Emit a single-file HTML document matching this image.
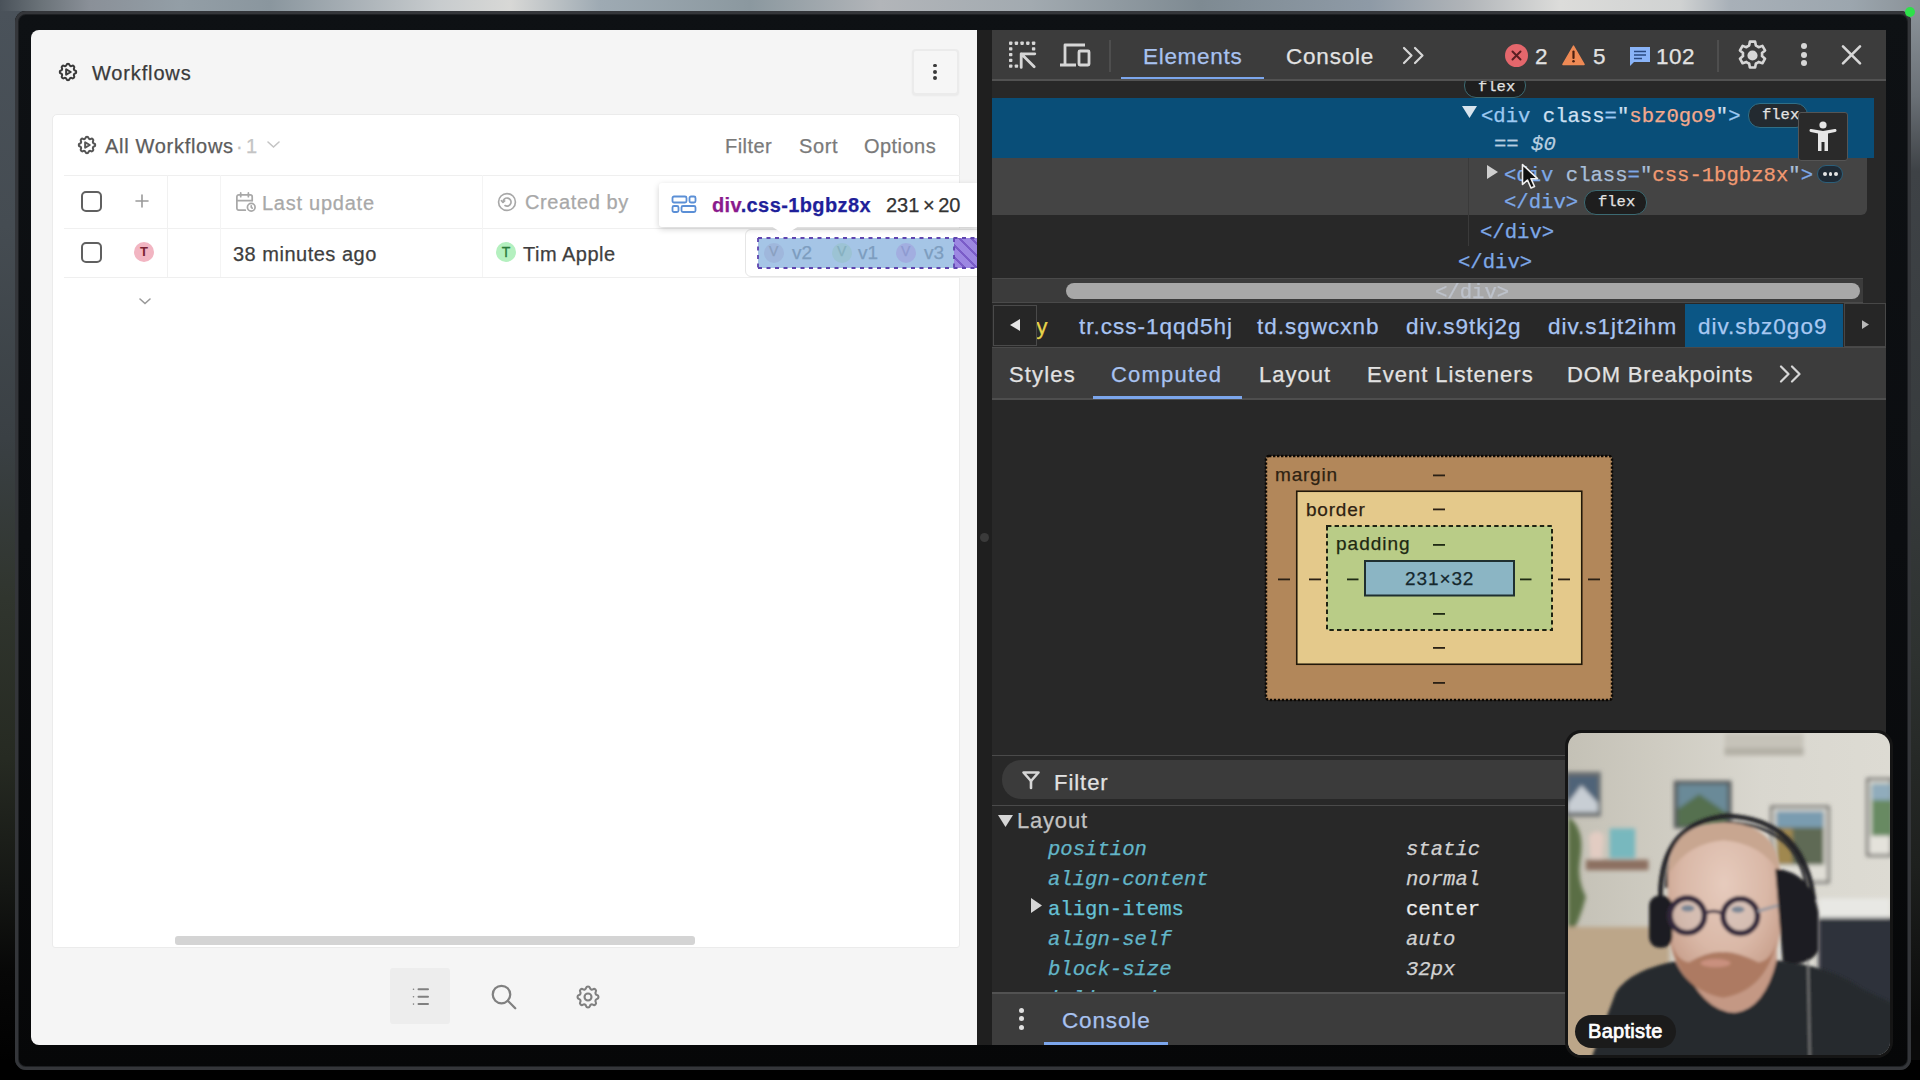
<!DOCTYPE html>
<html><head><meta charset="utf-8">
<style>
*{box-sizing:border-box;margin:0;padding:0}
html,body{width:1920px;height:1080px;overflow:hidden}
body{position:relative;background:#000;font-family:"Liberation Sans",sans-serif}
.a{position:absolute}
.sans{font-family:"Liberation Sans",sans-serif}
.t{line-height:1;white-space:nowrap;-webkit-text-stroke:0.25px currentColor}
.mono{font-family:"Liberation Mono",monospace}
#bgtop{left:0;top:0;width:1920px;height:40px;background:linear-gradient(90deg,#4a525a 0px,#6a7278 40px,#8a9098 90px,#939ea6 180px,#8a969e 270px,#a7afb5 350px,#c8ccce 440px,#d8d8d6 510px,#9eaab3 600px,#8b989f 750px,#b2b5b9 880px,#a2aab0 1030px,#7e8a92 1200px,#8e9aa6 1370px,#b0b4b8 1465px,#dcdcda 1560px,#d0d2d2 1680px,#a8b0b8 1730px,#9ca6ae 1850px,#8a9298 1920px)}
#bgleft{left:0;top:11px;width:40px;height:1069px;background:linear-gradient(180deg,#4a525a 0%,#454c52 20%,#3a4044 40%,#30352e 55%,#262a22 70%,#151714 82%,#070707 90%,#000 100%)}
#bgright{left:1880px;top:11px;width:40px;height:1069px;background:linear-gradient(180deg,#8a9298 0%,#6a7076 8%,#3e4246 15%,#383c3e 40%,#2e3230 60%,#1e201e 80%,#0a0a0a 95%)}
#bgbot{left:0;top:1060px;width:1920px;height:20px;background:#000}
#frame{left:15px;top:11px;width:1896px;height:1059px;border-radius:11px;background:linear-gradient(180deg,#0e1114 0%,#0b0d10 50%,#060708 100%);box-shadow:inset 0 0 0 3px #34363a, inset 0 0 0 4px #1e2023}
#left{left:31px;top:30px;width:946px;height:1015px;background:#f5f5f5;border-radius:8px 0 0 8px;overflow:hidden}
#sep{left:977px;top:30px;width:15px;height:1015px;background:#1f1f1f}
#dt{left:992px;top:30px;width:894px;height:1015px;background:#282828;overflow:hidden}
</style></head><body>
<div id="bgtop" class="a"></div>
<div id="bgleft" class="a"></div>
<div id="bgright" class="a"></div>
<div id="bgbot" class="a"></div>
<div id="frame" class="a"></div>
<div id="left" class="a"></div>

<!-- LEFT PANEL CONTENT -->
<svg class="a" style="left:56.5px;top:61px" width="22" height="22" viewBox="0 0 24 24" fill="none" stroke="#3a3a3a" stroke-width="2.2" stroke-linecap="round" stroke-linejoin="round"><path d="M10.325 4.317c.426 -1.756 2.924 -1.756 3.35 0a1.724 1.724 0 0 0 2.573 1.066c1.543 -.94 3.31 .826 2.37 2.37a1.724 1.724 0 0 0 1.065 2.572c1.756 .426 1.756 2.924 0 3.35a1.724 1.724 0 0 0 -1.066 2.573c.94 1.543 -.826 3.31 -2.37 2.37a1.724 1.724 0 0 0 -2.572 1.065c-.426 1.756 -2.924 1.756 -3.35 0a1.724 1.724 0 0 0 -2.573 -1.066c-1.543 .94 -3.31 -.826 -2.37 -2.37a1.724 1.724 0 0 0 -1.065 -2.572c-1.756 -.426 -1.756 -2.924 0 -3.35a1.724 1.724 0 0 0 1.066 -2.573c-.94 -1.543 .826 -3.31 2.37 -2.37c1 .608 2.296 .07 2.572 -1.065z"/><path d="M10 9v6l5 -3z"/></svg>
<div class="a t" style="left:92px;top:63px;font-size:20px;letter-spacing:0.85px;color:#3a3a3a">Workflows</div>
<div class="a" style="left:912px;top:48.5px;width:47px;height:46.5px;border:2px solid #ebebeb;border-radius:4px;background:#f6f6f6;box-shadow:0 1px 2px rgba(0,0,0,0.05)"></div>
<div class="a" style="left:933.2px;top:63.7px;width:3.6px;height:3.6px;border-radius:2px;background:#3a3a3a"></div>
<div class="a" style="left:933.2px;top:70px;width:3.6px;height:3.6px;border-radius:2px;background:#3a3a3a"></div>
<div class="a" style="left:933.2px;top:76.3px;width:3.6px;height:3.6px;border-radius:2px;background:#3a3a3a"></div>

<div class="a" style="left:52px;top:114px;width:908px;height:834px;background:#fff;border:1px solid #ebebeb;border-radius:5px 5px 3px 3px"></div>
<svg class="a" style="left:76px;top:134px" width="22" height="22" viewBox="0 0 24 24" fill="none" stroke="#555" stroke-width="2.2" stroke-linecap="round" stroke-linejoin="round"><path d="M10.325 4.317c.426 -1.756 2.924 -1.756 3.35 0a1.724 1.724 0 0 0 2.573 1.066c1.543 -.94 3.31 .826 2.37 2.37a1.724 1.724 0 0 0 1.065 2.572c1.756 .426 1.756 2.924 0 3.35a1.724 1.724 0 0 0 -1.066 2.573c.94 1.543 -.826 3.31 -2.37 2.37a1.724 1.724 0 0 0 -2.572 1.065c-.426 1.756 -2.924 1.756 -3.35 0a1.724 1.724 0 0 0 -2.573 -1.066c-1.543 .94 -3.31 -.826 -2.37 -2.37a1.724 1.724 0 0 0 -1.065 -2.572c-1.756 -.426 -1.756 -2.924 0 -3.35a1.724 1.724 0 0 0 1.066 -2.573c-.94 -1.543 .826 -3.31 2.37 -2.37c1 .608 2.296 .07 2.572 -1.065z"/><path d="M10 9v6l5 -3z"/></svg>
<div class="a t" style="left:105px;top:135.5px;font-size:20px;letter-spacing:0.7px;color:#5c5c5c">All Workflows</div>
<div class="a t" style="left:236px;top:135.5px;font-size:20px;color:#c4c4c4">·</div>
<div class="a t" style="left:246px;top:135.5px;font-size:20px;color:#c4c4c4">1</div>
<svg class="a" style="left:266px;top:139px" width="15" height="11" viewBox="0 0 15 11" fill="none" stroke="#c4c4c4" stroke-width="1.6" stroke-linecap="round"><path d="M2 3l5.5 5 5.5-5"/></svg>
<div class="a t" style="left:725px;top:136px;font-size:20px;letter-spacing:0.45px;color:#7a7a7a">Filter</div>
<div class="a t" style="left:799px;top:136px;font-size:20px;letter-spacing:0.6px;color:#7a7a7a">Sort</div>
<div class="a t" style="left:864px;top:136px;font-size:20px;letter-spacing:0.45px;color:#7a7a7a">Options</div>

<div class="a" style="left:64px;top:175px;width:896px;height:1px;background:#efefef"></div>
<div class="a" style="left:64px;top:228px;width:896px;height:1px;background:#f0f0f0"></div>
<div class="a" style="left:64px;top:277px;width:896px;height:1px;background:#efefef"></div>
<div class="a" style="left:167px;top:175px;width:1px;height:102px;background:#f1f1f1"></div>
<div class="a" style="left:220px;top:175px;width:1px;height:102px;background:#f4f4f4"></div>
<div class="a" style="left:482px;top:175px;width:1px;height:102px;background:#f4f4f4"></div>

<div class="a" style="left:80.5px;top:190.5px;width:21.5px;height:21.5px;border:2px solid #606060;border-radius:5px"></div>
<div class="a" style="left:80.5px;top:241.5px;width:21.5px;height:21.5px;border:2px solid #606060;border-radius:5px"></div>
<svg class="a" style="left:134px;top:193px" width="16" height="16" viewBox="0 0 16 16" stroke="#9a9a9a" stroke-width="1.6" stroke-linecap="round"><path d="M8 2v12M2 8h12"/></svg>
<div class="a" style="left:134px;top:242px;width:20px;height:20px;border-radius:10px;background:#f2b5c2;color:#7a2232;font-size:13px;font-weight:700;line-height:20px;text-align:center">T</div>

<svg class="a" style="left:234px;top:190px" width="23" height="23" viewBox="0 0 24 24" fill="none" stroke="#a8a8a8" stroke-width="1.8" stroke-linecap="round" stroke-linejoin="round"><path d="M11.795 21h-6.795a2 2 0 0 1 -2 -2v-12a2 2 0 0 1 2 -2h12a2 2 0 0 1 2 2v4"/><path d="M18 18m-4 0a4 4 0 1 0 8 0a4 4 0 1 0 -8 0"/><path d="M15 3v4"/><path d="M7 3v4"/><path d="M3 11h16"/><path d="M18 16.496v1.504l1 1"/></svg>
<div class="a t" style="left:262px;top:192.5px;font-size:20px;letter-spacing:0.75px;color:#a8a8a8">Last update</div>
<svg class="a" style="left:496px;top:191px" width="22" height="22" viewBox="0 0 24 24" fill="none" stroke="#a8a8a8" stroke-width="1.8" stroke-linecap="round" stroke-linejoin="round"><circle cx="12" cy="12" r="9.2"/><path d="M7.6 12.3a4.4 4.4 0 1 1 2.2 3.6"/><path d="M5.9 10.6l1.7 1.9 1.9-1.6"/></svg>
<div class="a t" style="left:525px;top:192px;font-size:20px;letter-spacing:0.6px;color:#a8a8a8">Created by</div>

<div class="a t" style="left:233px;top:243.5px;font-size:20px;letter-spacing:0.5px;color:#3e3e3e">38 minutes ago</div>
<div class="a" style="left:496px;top:242px;width:20px;height:20px;border-radius:10px;background:#b4f0bf;color:#2a7a3a;font-size:14px;font-weight:400;-webkit-text-stroke:0.3px #2a7a3a;line-height:20px;text-align:center">T</div>
<div class="a t" style="left:523px;top:243.5px;font-size:20px;letter-spacing:0.5px;color:#3e3e3e">Tim Apple</div>

<!-- hovered cell + highlight -->
<div class="a" style="left:745px;top:229px;width:240px;height:48px;border:1px solid #e6e6e6;border-radius:6px;background:#fff"></div>
<div class="a" style="left:758px;top:238px;width:196px;height:30px;background:#a5c5e6"></div>
<div class="a" style="left:954px;top:238px;width:23px;height:30px;background:repeating-linear-gradient(45deg,#9c87e2 0 7px,#7a5cc8 7px 8.5px)"></div>
<svg class="a" style="left:757px;top:237px" width="220" height="32" viewBox="0 0 220 32" fill="none" stroke="#5f45b0" stroke-width="1.8" stroke-dasharray="4 4.5"><path d="M1 1H220M1 31H220M1 1V31M197 1V31"/></svg>
<div class="a" style="left:764px;top:243px;width:20px;height:20px;border-radius:10px;background:#9fb7dc"></div>
<div class="a t" style="left:769px;top:244px;font-size:14px;color:#8aa0c0">V</div>
<div class="a t" style="left:792px;top:243px;font-size:19px;color:#7d9dbf">v2</div>
<div class="a" style="left:832px;top:243px;width:20px;height:20px;border-radius:10px;background:#9cc3d4"></div>
<div class="a t" style="left:837px;top:244px;font-size:14px;color:#86b0c0">V</div>
<div class="a t" style="left:858px;top:243px;font-size:19px;color:#7d9dbf">v1</div>
<div class="a" style="left:896px;top:243px;width:20px;height:20px;border-radius:10px;background:#a2aee0"></div>
<div class="a t" style="left:901px;top:244px;font-size:14px;color:#8e9ad0">V</div>
<div class="a t" style="left:924px;top:243px;font-size:19px;color:#7d9dbf">v3</div>

<!-- tooltip -->
<div class="a" style="left:659px;top:182.5px;width:318px;height:44px;background:#fff;border-radius:3px 0 0 3px;box-shadow:0 2px 6px rgba(0,0,0,0.18)"></div>
<div class="a" style="left:771px;top:226px;width:0;height:0;border-left:14px solid transparent;border-right:14px solid transparent;border-top:9px solid #fff"></div>
<svg class="a" style="left:671px;top:195px" width="26" height="19" viewBox="0 0 26 19" fill="none" stroke="#5b8fd6" stroke-width="1.8"><rect x="1.5" y="1.5" width="14" height="6" rx="1.5"/><rect x="18.5" y="1.5" width="6" height="6" rx="1.5"/><rect x="1.5" y="11" width="6" height="6" rx="1.5"/><rect x="10.5" y="11" width="14" height="6" rx="1.5"/></svg>
<div class="a t" style="left:712px;top:195px;font-size:20px;font-weight:700;letter-spacing:0.4px;color:#1f1f9a"><span style="color:#8a1a8c">div</span>.css-1bgbz8x</div>
<div class="a t" style="left:886px;top:195px;font-size:20px;color:#333">231<span style="letter-spacing:-2px"> </span>×<span style="letter-spacing:-2px"> </span>20</div>

<svg class="a" style="left:137px;top:295px" width="16" height="12" viewBox="0 0 16 12" fill="none" stroke="#999" stroke-width="1.6" stroke-linecap="round"><path d="M3 4l5 4.5 5-4.5"/></svg>

<div class="a" style="left:175px;top:935.5px;width:520px;height:9px;border-radius:3px;background:#d4d4d4"></div>

<!-- bottom nav -->
<div class="a" style="left:390px;top:968px;width:60px;height:56px;background:#ededed;border-radius:3px"></div>
<svg class="a" style="left:408px;top:984px" width="26" height="26" viewBox="0 0 26 26" fill="none" stroke="#808080" stroke-width="2" stroke-linecap="round"><path d="M10.5 5.3h9.5M10.5 12.7h9.5M10.5 20.1h9.5"/><path d="M5.5 5.3v.01M5.5 12.7v.01M5.5 20.1v.01" stroke-width="1.6"/></svg>
<svg class="a" style="left:489px;top:982px" width="30" height="30" viewBox="0 0 24 24" fill="none" stroke="#808080" stroke-width="1.8" stroke-linecap="round"><path d="M10 10m-7 0a7 7 0 1 0 14 0a7 7 0 1 0 -14 0"/><path d="M21 21l-6 -6"/></svg>
<svg class="a" style="left:574px;top:983px" width="28" height="28" viewBox="0 0 24 24" fill="none" stroke="#808080" stroke-width="1.8" stroke-linecap="round" stroke-linejoin="round"><path d="M10.325 4.317c.426 -1.756 2.924 -1.756 3.35 0a1.724 1.724 0 0 0 2.573 1.066c1.543 -.94 3.31 .826 2.37 2.37a1.724 1.724 0 0 0 1.065 2.572c1.756 .426 1.756 2.924 0 3.35a1.724 1.724 0 0 0 -1.066 2.573c.94 1.543 -.826 3.31 -2.37 2.37a1.724 1.724 0 0 0 -2.572 1.065c-.426 1.756 -2.924 1.756 -3.35 0a1.724 1.724 0 0 0 -2.573 -1.066c-1.543 .94 -3.31 -.826 -2.37 -2.37a1.724 1.724 0 0 0 -1.065 -2.572c-1.756 -.426 -1.756 -2.924 0 -3.35a1.724 1.724 0 0 0 1.066 -2.573c-.94 -1.543 .826 -3.31 2.37 -2.37c1 .608 2.296 .07 2.572 -1.065z"/><circle cx="12" cy="12" r="3"/></svg>

<div id="sep" class="a"></div>
<div class="a" style="left:980px;top:533px;width:9px;height:9px;border-radius:5px;background:#3a3a3a"></div>
<div class="a" style="left:1905px;top:7px;width:10px;height:10px;border-radius:5px;background:#2ee04a"></div>
<div id="dt" class="a"></div>

<!-- DEVTOOLS -->
<div class="a" style="left:1464px;top:73px;width:62px;height:25px;border-radius:12px;background:#1e1e1e;border:1.5px solid #3c6a72"></div>
<div class="a t mono" style="left:1478px;top:80px;font-size:15.5px;color:#e3e3e3">flex</div>
<div class="a" style="left:992px;top:30px;width:894px;height:49px;background:#3c3c3c"></div>
<div class="a" style="left:992px;top:79px;width:894px;height:2px;background:#525252"></div>
<!-- inspect icon -->
<svg class="a" style="left:1007px;top:41px" width="32" height="30" viewBox="0 0 32 30" fill="#d6d6d6"><g><rect x="2" y="0.5" width="3.4" height="3.4" rx="0.8"/><rect x="7.7" y="0.5" width="3.4" height="3.4" rx="0.8"/><rect x="13.4" y="0.5" width="3.4" height="3.4" rx="0.8"/><rect x="19.1" y="0.5" width="3.4" height="3.4" rx="0.8"/><rect x="24.9" y="0.5" width="3.4" height="3.4" rx="0.8"/><rect x="24.9" y="6.2" width="3.4" height="3.4" rx="0.8"/><rect x="2" y="6.2" width="3.4" height="3.4" rx="0.8"/><rect x="2" y="11.9" width="3.4" height="3.4" rx="0.8"/><rect x="2" y="17.7" width="3.4" height="3.4" rx="0.8"/><rect x="2" y="23.4" width="3.4" height="3.4" rx="0.8"/><rect x="7.7" y="23.4" width="3.4" height="3.4" rx="0.8"/></g><path d="M14.2 12.8L27.2 25.8M14.2 12.8h13.6M14.2 12.8v13.6" fill="none" stroke="#d6d6d6" stroke-width="2.8" stroke-linecap="round"/></svg>
<!-- device icon -->
<svg class="a" style="left:1058px;top:42px" width="34" height="26" viewBox="0 0 34 26" fill="none" stroke="#d6d6d6" stroke-width="2.8" stroke-linejoin="round"><path d="M27 3H7v20H2M7 23h11"/><rect x="21" y="9" width="10" height="14" rx="1"/></svg>
<div class="a" style="left:1108.5px;top:40px;width:2px;height:32px;background:#4e4e4e"></div>
<div class="a t" style="left:1143px;top:46px;font-size:22.5px;letter-spacing:0.7px;color:#a8c2f0">Elements</div>
<div class="a" style="left:1121px;top:77px;width:143px;height:3px;background:#7ca6ec"></div>
<div class="a t" style="left:1286px;top:46px;font-size:22.5px;letter-spacing:0.8px;color:#e2e2e2">Console</div>
<svg class="a" style="left:1402px;top:46px" width="25" height="19" viewBox="0 0 25 19" fill="none" stroke="#d6d6d6" stroke-width="2.2" stroke-linecap="round" stroke-linejoin="round"><path d="M2 2l7.5 7.5L2 17M13 2l7.5 7.5L13 17"/></svg>
<!-- error/warn/info -->
<div class="a" style="left:1505px;top:44px;width:23px;height:23px;border-radius:12px;background:#e4676c"></div>
<svg class="a" style="left:1505px;top:44px" width="23" height="23" viewBox="0 0 23 23" stroke="#5a1f22" stroke-width="2" stroke-linecap="round"><path d="M7.5 7.5l8 8M15.5 7.5l-8 8"/></svg>
<div class="a t" style="left:1535px;top:46px;font-size:22.5px;color:#e2e2e2">2</div>
<svg class="a" style="left:1562px;top:45px" width="23" height="20.5" viewBox="0 0 25 22"><path d="M12.5 1L24 21H1z" fill="#ef8a55" stroke="#ef8a55" stroke-width="1.5" stroke-linejoin="round"/><path d="M12.5 7v7" stroke="#4a2010" stroke-width="2.4" stroke-linecap="round"/><circle cx="12.5" cy="17.5" r="1.4" fill="#4a2010"/></svg>
<div class="a t" style="left:1593px;top:46px;font-size:22.5px;color:#e2e2e2">5</div>
<svg class="a" style="left:1629px;top:46px" width="22" height="20" viewBox="0 0 22 20"><path d="M1 1h20v15H5l-4 4z" fill="#8ab4f8"/><path d="M5 5.5h12M5 9h12M5 12.5h8" stroke="#2a4a80" stroke-width="1.6"/></svg>
<div class="a t" style="left:1656px;top:46px;font-size:22.5px;letter-spacing:0.5px;color:#e2e2e2">102</div>
<div class="a" style="left:1716.5px;top:40px;width:2px;height:32px;background:#4e4e4e"></div>
<svg class="a" style="left:1734.5px;top:37.5px" width="35" height="35" viewBox="0 0 24 24" fill="none" stroke="#d6d6d6" stroke-width="1.8" stroke-linejoin="round"><path d="M10.2 2.5h3.6l.5 2.7c.7.3 1.3.6 1.9 1.1l2.6-.9 1.8 3.1-2.1 1.8c.1.7.1 1.4 0 2.1l2.1 1.8-1.8 3.1-2.6-.9c-.6.5-1.2.8-1.9 1.1l-.5 2.7h-3.6l-.5-2.7c-.7-.3-1.3-.6-1.9-1.1l-2.6.9-1.8-3.1 2.1-1.8c-.1-.7-.1-1.4 0-2.1L3.4 8.5l1.8-3.1 2.6.9c.6-.5 1.2-.8 1.9-1.1z"/><circle cx="12" cy="12" r="2.6" fill="#d6d6d6"/></svg>
<div class="a" style="left:1801px;top:43px;width:6px;height:6px;border-radius:3px;background:#d6d6d6"></div>
<div class="a" style="left:1801px;top:52px;width:6px;height:6px;border-radius:3px;background:#d6d6d6"></div>
<div class="a" style="left:1801px;top:60px;width:6px;height:6px;border-radius:3px;background:#d6d6d6"></div>
<svg class="a" style="left:1840px;top:44px" width="23" height="22" viewBox="0 0 23 22" stroke="#d6d6d6" stroke-width="2.6" stroke-linecap="round"><path d="M3 2.3l17 17M20 2.3l-17 17"/></svg>

<!-- elements tree -->
<div class="a" style="left:992px;top:98px;width:882px;height:60px;background:#094e78"></div>
<div class="a" style="left:992px;top:158px;width:875px;height:57px;background:#444;border-radius:0 0 6px 0"></div>
<div class="a" style="left:992px;top:79px;width:894px;height:2px;background:#525252"></div>

<svg class="a" style="left:1462px;top:106px" width="15" height="12" viewBox="0 0 15 12"><path d="M0 0h15L7.5 12z" fill="#d8e4ee"/></svg>
<div class="a t mono" style="left:1481px;top:107px;font-size:20.6px;color:#9dc9f2">&lt;div <span style="color:#cfe0f2">class</span>=<span style="color:#cfe0f2">"</span><span style="color:#f4a98c">sbz0go9</span><span style="color:#cfe0f2">"</span>&gt;</div>
<div class="a" style="left:1748px;top:103px;width:60px;height:25px;border-radius:12px;background:#232a30;border:1.5px solid #2f6f88"></div>
<div class="a t mono" style="left:1762px;top:108px;font-size:15.5px;color:#e3e3e3">flex</div>
<div class="a t mono" style="left:1494px;top:134.5px;font-size:20.6px;color:#b9cfe0">== <i>$0</i></div>
<div class="a" style="left:1798px;top:112px;width:50px;height:49px;background:#2a2a2a;border:1.5px solid #555;border-radius:3px"></div>
<svg class="a" style="left:1808px;top:120px" width="30" height="32" viewBox="0 0 30 32" fill="#e6e6e6"><circle cx="15" cy="5" r="3.6"/><path d="M1.5 10.5c0-1 .8-1.6 1.7-1.4L15 11l11.8-1.9c.9-.2 1.7.4 1.7 1.4 0 .8-.5 1.4-1.3 1.5L20 13.6V31h-3.5v-9h-3v9H10V13.6l-7.2-1.6c-.8-.1-1.3-.7-1.3-1.5z"/></svg>

<svg class="a" style="left:1487px;top:165px" width="11" height="14" viewBox="0 0 11 14"><path d="M0 0l11 7-11 7z" fill="#cfcfcf"/></svg>
<div class="a t mono" style="left:1504px;top:166px;font-size:20.6px;color:#7ea9e8">&lt;div <span style="color:#a9bfd9">class</span>=<span style="color:#a9bfd9">"</span><span style="color:#f29a72">css-1bgbz8x</span><span style="color:#a9bfd9">"</span>&gt;</div>
<div class="a" style="left:1817px;top:165px;width:26px;height:18px;border-radius:9px;background:#1f2a35;border:1.5px solid #2c5f7a"></div>
<div class="a" style="left:1823px;top:172px;width:3.5px;height:3.5px;border-radius:2px;background:#e6e6e6"></div>
<div class="a" style="left:1828.5px;top:172px;width:3.5px;height:3.5px;border-radius:2px;background:#e6e6e6"></div>
<div class="a" style="left:1834px;top:172px;width:3.5px;height:3.5px;border-radius:2px;background:#e6e6e6"></div>
<div class="a t mono" style="left:1504px;top:193px;font-size:20.6px;color:#7ea9e8">&lt;/div&gt;</div>
<div class="a" style="left:1584px;top:190px;width:63px;height:25px;border-radius:12px;background:#1e1e1e;border:1.5px solid #3c6a72"></div>
<div class="a t mono" style="left:1598px;top:195px;font-size:15.5px;color:#e3e3e3">flex</div>
<div class="a t mono" style="left:1480px;top:223px;font-size:20.6px;color:#7ea9e8">&lt;/div&gt;</div>
<div class="a t mono" style="left:1458px;top:253px;font-size:20.6px;color:#7ea9e8">&lt;/div&gt;</div>
<div class="a" style="left:1468px;top:158px;width:1px;height:88px;background:#3a3a3a"></div>
<!-- cursor -->
<svg class="a" style="left:1521px;top:163px" width="22" height="28" viewBox="0 0 22 28"><path d="M1.5 1.5v20l5-4.5 3.5 8 3.5-1.5-3.5-7.8h6.5z" fill="#111" stroke="#f0f0f0" stroke-width="1.6" stroke-linejoin="round"/></svg>

<!-- horizontal scrollbar -->
<div class="a" style="left:992px;top:278px;width:871px;height:25px;background:#3b3b3b;border-top:1px solid #4a4a4a;border-bottom:1px solid #4a4a4a"></div>
<div class="a" style="left:1066px;top:283px;width:794px;height:16px;border-radius:8px;background:#a8a8a8"></div>
<div class="a t mono" style="left:1435px;top:283px;font-size:20.6px;color:#cfd8e8;opacity:0.55">&lt;/div&gt;</div>

<!-- breadcrumbs -->
<div class="a" style="left:993px;top:305px;width:44px;height:41px;border:1.5px solid #4a4a4a;background:#262626"></div>
<svg class="a" style="left:1010px;top:319px" width="10" height="12" viewBox="0 0 10 12"><path d="M10 0v12L0 6z" fill="#e6e6e6"/></svg>
<div class="a t" style="left:1030px;top:316px;font-size:22.5px;color:#e6d24a">ty</div>
<div class="a" style="left:993px;top:305px;width:44px;height:41px;border:1.5px solid #4a4a4a;background:#262626"></div>
<svg class="a" style="left:1010px;top:319px" width="10" height="12" viewBox="0 0 10 12"><path d="M10 0v12L0 6z" fill="#e6e6e6"/></svg>
<div class="a t" style="left:1079px;top:316px;font-size:22.5px;letter-spacing:1.0px;color:#a8c4f2">tr.css-1qqd5hj</div>
<div class="a t" style="left:1257px;top:316px;font-size:22.5px;letter-spacing:1.0px;color:#a8c4f2">td.sgwcxnb</div>
<div class="a t" style="left:1406px;top:316px;font-size:22.5px;letter-spacing:1.0px;color:#a8c4f2">div.s9tkj2g</div>
<div class="a t" style="left:1548px;top:316px;font-size:22.5px;letter-spacing:1.0px;color:#a8c4f2">div.s1jt2ihm</div>
<div class="a" style="left:1685px;top:304px;width:158px;height:44px;background:#0b5685"></div>
<div class="a t" style="left:1698px;top:316px;font-size:22.5px;letter-spacing:1.0px;color:#a8c8f2">div.sbz0go9</div>
<div class="a" style="left:1844px;top:303px;width:42px;height:44px;background:#262626;border:1.5px solid #474747"></div>
<svg class="a" style="left:1862px;top:320px" width="7" height="9" viewBox="0 0 8 10"><path d="M0 0v10l8-5z" fill="#b8b8b8"/></svg>
<div class="a" style="left:992px;top:347px;width:894px;height:1px;background:#4a4a4a"></div>

<!-- sub tabs -->
<div class="a" style="left:992px;top:348px;width:894px;height:50px;background:#3c3c3c"></div>
<div class="a" style="left:992px;top:398px;width:894px;height:2px;background:#4e4e4e"></div>
<div class="a t" style="left:1009px;top:364px;font-size:22px;letter-spacing:1.15px;color:#e2e2e2">Styles</div>
<div class="a t" style="left:1111px;top:364px;font-size:22px;letter-spacing:1.2px;color:#a8c2f0">Computed</div>
<div class="a" style="left:1093px;top:396px;width:149px;height:3px;background:#7ca6ec"></div>
<div class="a t" style="left:1259px;top:364px;font-size:22px;letter-spacing:1.0px;color:#e2e2e2">Layout</div>
<div class="a t" style="left:1367px;top:364px;font-size:22px;letter-spacing:1.0px;color:#e2e2e2">Event Listeners</div>
<div class="a t" style="left:1567px;top:364px;font-size:22px;letter-spacing:0.85px;color:#e2e2e2">DOM Breakpoints</div>
<svg class="a" style="left:1779px;top:365px" width="25" height="18" viewBox="0 0 25 18" fill="none" stroke="#d6d6d6" stroke-width="2.2" stroke-linecap="round" stroke-linejoin="round"><path d="M2 1.5l7.5 7.5L2 16.5M13 1.5l7.5 7.5L13 16.5"/></svg>

<!-- box model -->
<svg class="a" style="left:1260px;top:450px" width="360" height="260" viewBox="1260 450 360 260">
<rect x="1266" y="456" width="346" height="244" rx="3" fill="#b2875a" stroke="#0c0804" stroke-width="2.4" stroke-dasharray="2.4 1.6"/>
<rect x="1296.75" y="491.25" width="285" height="173" fill="#e4c98b" stroke="#22180a" stroke-width="1.6"/>
<rect x="1327" y="526" width="225" height="104" fill="#b9cc87" stroke="#1e2212" stroke-width="2" stroke-dasharray="4.4 3.2"/>
<rect x="1365" y="561" width="149" height="34.5" fill="#8bb5c4" stroke="#1f2f30" stroke-width="2"/>
<g fill="#2a2015">
<rect x="1433" y="474.5" width="12" height="1.8"/>
<rect x="1433" y="508.5" width="12" height="1.8"/>
<rect x="1433" y="544" width="12" height="1.8" fill="#1f2a14"/>
<rect x="1433" y="613" width="12" height="1.8" fill="#1f2a14"/>
<rect x="1433" y="647" width="12" height="1.8"/>
<rect x="1433" y="682" width="12" height="1.8"/>
<rect x="1278" y="578.5" width="12" height="1.8"/>
<rect x="1309" y="578.5" width="12" height="1.8"/>
<rect x="1347" y="578.5" width="11.5" height="1.8" fill="#1f2a14"/>
<rect x="1520" y="578.5" width="11.5" height="1.8" fill="#1f2a14"/>
<rect x="1558" y="578.5" width="12" height="1.8"/>
<rect x="1588" y="578.5" width="12" height="1.8"/>
</g>
</svg>
<div class="a t" style="left:1275px;top:465px;font-size:19px;letter-spacing:0.8px;color:#2e2212">margin</div>
<div class="a t" style="left:1306px;top:499.5px;font-size:19px;letter-spacing:0.8px;color:#2e2212">border</div>
<div class="a t" style="left:1336px;top:534px;font-size:19px;letter-spacing:1.0px;color:#1e2812">padding</div>
<div class="a t" style="left:1405px;top:569px;font-size:19px;letter-spacing:0.9px;color:#15282e">231×32</div>

<!-- filter -->
<div class="a" style="left:992px;top:755px;width:894px;height:1px;background:#4a4a4a"></div>
<div class="a" style="left:1002px;top:760px;width:880px;height:39px;border-radius:19px;background:#3b3b3b"></div>
<svg class="a" style="left:1021px;top:770px" width="20" height="20" viewBox="0 0 20 20" fill="none" stroke="#d6d6d6" stroke-width="2.6" stroke-linejoin="round" stroke-linecap="round"><path d="M2.5 2.5h15L10 11z"/><path d="M10 11v7"/></svg>
<div class="a t" style="left:1054px;top:771.5px;font-size:22px;letter-spacing:0.95px;color:#e2e2e2">Filter</div>
<div class="a" style="left:992px;top:805px;width:894px;height:1px;background:#4a4a4a"></div>

<!-- layout props -->
<svg class="a" style="left:998px;top:815px" width="15" height="12" viewBox="0 0 15 12"><path d="M0 0h15L7.5 12z" fill="#d6d6d6"/></svg>
<div class="a t" style="left:1017px;top:810px;font-size:22px;letter-spacing:0.8px;color:#c2c2c2">Layout</div>
<div class="a t mono" style="left:1048px;top:840px;font-size:20.6px;font-style:italic;color:#63b6c8">position</div>
<div class="a t mono" style="left:1406px;top:840px;font-size:20.6px;font-style:italic;color:#d2d2d2">static</div>
<div class="a t mono" style="left:1048px;top:870px;font-size:20.6px;font-style:italic;color:#63b6c8">align-content</div>
<div class="a t mono" style="left:1406px;top:870px;font-size:20.6px;font-style:italic;color:#d2d2d2">normal</div>
<svg class="a" style="left:1031px;top:898px" width="11" height="15" viewBox="0 0 11 15"><path d="M0 0l11 7.5-11 7.5z" fill="#d6d6d6"/></svg>
<div class="a t mono" style="left:1048px;top:900px;font-size:20.6px;color:#66c2d6">align-items</div>
<div class="a t mono" style="left:1406px;top:900px;font-size:20.6px;color:#ececec">center</div>
<div class="a t mono" style="left:1048px;top:930px;font-size:20.6px;font-style:italic;color:#63b6c8">align-self</div>
<div class="a t mono" style="left:1406px;top:930px;font-size:20.6px;font-style:italic;color:#d2d2d2">auto</div>
<div class="a t mono" style="left:1048px;top:960px;font-size:20.6px;font-style:italic;color:#63b6c8">block-size</div>
<div class="a t mono" style="left:1406px;top:960px;font-size:20.6px;font-style:italic;color:#d2d2d2">32px</div>

<div class="a t mono" style="left:1048px;top:990px;font-size:20.6px;font-style:italic;color:#63b6c8">inline-size</div>
<div class="a t mono" style="left:1406px;top:990px;font-size:20.6px;font-style:italic;color:#d2d2d2">231px</div>
<!-- drawer -->
<div class="a" style="left:992px;top:992px;width:894px;height:53px;background:#3c3c3c;border-top:2px solid #525252"></div>
<div class="a" style="left:1019px;top:1008px;width:5px;height:5px;border-radius:3px;background:#e0e0e0"></div>
<div class="a" style="left:1019px;top:1016px;width:5px;height:5px;border-radius:3px;background:#e0e0e0"></div>
<div class="a" style="left:1019px;top:1025px;width:5px;height:5px;border-radius:3px;background:#e0e0e0"></div>
<div class="a t" style="left:1062px;top:1010px;font-size:22.5px;letter-spacing:0.85px;color:#a8c2f0">Console</div>
<div class="a" style="left:1044px;top:1042px;width:124px;height:3px;background:#7ca6ec"></div>


<!-- WEBCAM -->
<div class="a" style="left:1565px;top:730px;width:328px;height:328px;border-radius:16px;background:#151515"></div>
<svg class="a" style="left:1568px;top:733px" width="322" height="322" viewBox="0 0 1080 1080">
<defs>
<clipPath id="cc"><rect x="0" y="0" width="1080" height="1080" rx="46"/></clipPath>
<filter id="bl" x="-10%" y="-10%" width="120%" height="120%"><feGaussianBlur stdDeviation="7"/></filter>
<filter id="bl2" x="-10%" y="-10%" width="120%" height="120%"><feGaussianBlur stdDeviation="6"/></filter>
<radialGradient id="face" cx="0.5" cy="0.35" r="0.65"><stop offset="0" stop-color="#e6cbbd"/><stop offset="0.6" stop-color="#d9b7a6"/><stop offset="1" stop-color="#c49a86"/></radialGradient>
<linearGradient id="wall" x1="0" y1="0" x2="1" y2="0"><stop offset="0" stop-color="#c4c1b6"/><stop offset="0.3" stop-color="#cfccc2"/><stop offset="0.6" stop-color="#d9d7cf"/><stop offset="1" stop-color="#dddbd3"/></linearGradient>
</defs>
<g clip-path="url(#cc)">
<rect width="1080" height="1080" fill="url(#wall)"/>
<g filter="url(#bl)">
<rect x="525" y="0" width="265" height="75" fill="#c6c3b9"/>
<rect x="525" y="50" width="265" height="25" fill="#b3b0a6"/>
<rect x="-10" y="130" width="120" height="150" fill="#6a6e70"/>
<rect x="0" y="145" width="100" height="120" fill="#4f6478"/>
<path d="M0 235 L45 175 L100 235 L100 265 L0 265z" fill="#c8ced4"/>
<rect x="355" y="160" width="193" height="160" fill="#55585a"/>
<rect x="368" y="172" width="167" height="140" fill="#6a8a98"/>
<path d="M368 255 L440 205 L535 270 L535 312 L368 312z" fill="#557050"/>
<rect x="683" y="248" width="190" height="252" fill="#e0ded6"/>
<rect x="683" y="248" width="190" height="252" fill="none" stroke="#555552" stroke-width="8"/>
<rect x="698" y="262" width="160" height="180" fill="#5f6a55"/>
<path d="M698 262h160v55h-160z" fill="#7a9cb0"/>
<rect x="698" y="320" width="55" height="120" fill="#a08850"/>
<rect x="1005" y="155" width="80" height="255" fill="#e4e2db"/>
<rect x="1005" y="155" width="80" height="255" fill="none" stroke="#555552" stroke-width="8"/>
<rect x="1018" y="170" width="67" height="175" fill="#688a62"/>
<path d="M1018 170h67v55h-67z" fill="#90acbc"/>
<rect x="60" y="425" width="210" height="35" fill="#8c7060"/>
<rect x="140" y="320" width="85" height="100" fill="#78b8be"/>
<path d="M70 345 q30 -30 50 0 l-5 75 h-40z" fill="#e2ccc2"/>
<path d="M0 280 q60 40 40 150 q-10 60 20 120 q-20 80 -60 150z" fill="#5a6e44"/>
<rect x="-60" y="650" width="400" height="490" fill="#bca689"/>
<rect x="840" y="555" width="240" height="65" fill="#e8e8e4"/>
<rect x="840" y="620" width="300" height="520" fill="#2d313a"/>
</g>
<g filter="url(#bl2)">
<path d="M380 700 L380 770 Q450 935 560 938 Q660 925 700 770 L700 700z" fill="#c49884"/>
<path d="M60 1140 L160 870 Q210 790 380 762 Q450 935 560 938 Q660 925 700 762 Q880 780 990 860 L1140 930 L1140 1140z" fill="#25292d"/>
<path d="M310 560 Q305 300 535 278 Q790 290 825 560" fill="none" stroke="#232326" stroke-width="16"/>
<path d="M330 520 Q330 320 535 300 Q770 310 800 520" fill="none" stroke="#2a2a2e" stroke-width="10"/>
<path d="M335 480 Q335 305 522 300 Q708 305 712 480 L712 650 Q700 855 520 888 Q348 855 335 650z" fill="url(#face)"/>
<path d="M338 640 Q352 860 520 888 Q690 860 708 640 Q700 760 640 770 Q560 730 520 735 Q470 730 405 770 Q345 760 338 640z" fill="#ad7a62"/>
<ellipse cx="495" cy="772" rx="50" ry="14" fill="#c9907e"/>
<path d="M340 470 Q345 305 522 300 Q705 305 710 470 Q650 370 522 360 Q400 370 340 470z" fill="#c8a690"/>
<rect x="272" y="545" width="78" height="175" rx="34" fill="#1e1e21"/>
<path d="M695 455 Q815 465 840 600 L840 730 Q805 790 720 765z" fill="#1e1e21"/>
<circle cx="400" cy="612" r="58" fill="#c7c4c4" fill-opacity="0.3" stroke="#33263a" stroke-width="19"/>
<circle cx="578" cy="614" r="58" fill="#c7c4c4" fill-opacity="0.3" stroke="#33263a" stroke-width="19"/>
<path d="M458 605 Q488 590 518 605" stroke="#3c3044" stroke-width="10" fill="none"/>
<path d="M636 598 L705 578" stroke="#9a9aa0" stroke-width="10"/>
<ellipse cx="402" cy="588" rx="22" ry="11" fill="#7a8694"/>
<ellipse cx="570" cy="592" rx="22" ry="11" fill="#7a8694"/>
<path d="M805 760 L812 1140" stroke="#8a8a8a" stroke-width="5"/>
</g>
</g>
</svg>
<div class="a" style="left:1575px;top:1015px;width:101px;height:33px;border-radius:17px;background:#1b1b1b"></div>
<div class="a t" style="left:1588px;top:1021px;font-size:20px;letter-spacing:0.3px;-webkit-text-stroke:0.7px #fff;color:#fff">Baptiste</div>

</body></html>
